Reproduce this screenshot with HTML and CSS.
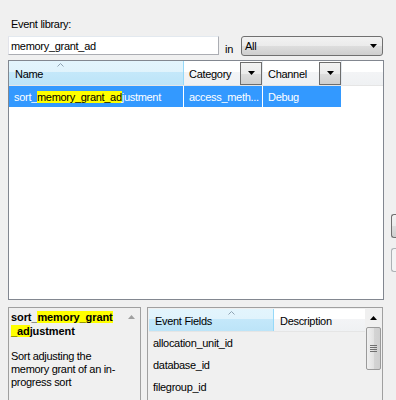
FILE: index.html
```html
<!DOCTYPE html>
<html lang="en">
<head>
    <meta charset="UTF-8">
    <meta name="viewport" content="width=device-width, initial-scale=1.0">
    <title>Event library</title>
    <link rel="stylesheet" href="styles.css">
</head>
<body>
    <div class="window">
        <div class="main">
            <div class="library-label">Event library:</div>

            <div class="search-row">
                <input class="search-box" type="text" value="memory_grant_ad">
                <span class="in-label">in</span>
                <div class="combo">
                    <span>All</span>
                    <svg class="combo-arrow" width="7" height="4" viewBox="0 0 7 4"><path d="M0 0h7L3.5 4z" fill="#000"/></svg>
                </div>
            </div>

            <div class="event-grid">
                <div class="grid-header">
                    <div class="head col-name sorted">
                        <svg class="sort-arrow" width="7" height="4" viewBox="0 0 7 4"><path d="M0.5 3.5L3.5 0.5L6.5 3.5" fill="none" stroke="#8fa3b3" stroke-width="1"/></svg>
                        Name
                    </div>
                    <div class="head col-cat">
                        Category
                        <span class="filter-btn"><svg width="7" height="4" viewBox="0 0 7 4"><path d="M0 0h7L3.5 4z" fill="#000"/></svg></span>
                    </div>
                    <div class="head col-chan">
                        Channel
                        <span class="filter-btn"><svg width="7" height="4" viewBox="0 0 7 4"><path d="M0 0h7L3.5 4z" fill="#000"/></svg></span>
                    </div>
                    <div class="head col-fill"></div>
                </div>

                <div class="grid-row selected">
                    <div class="cell col-name">sort_<mark>memory_grant_ad</mark>justment</div>
                    <div class="cell col-cat">access_meth...</div>
                    <div class="cell col-chan">Debug</div>
                </div>
            </div>

            <div class="details">
                <div class="summary">
                    <div class="summary-text">
                        <div class="summary-title">sort_<mark>memory_grant</mark><br><mark>_ad</mark>justment</div>
                        <div class="summary-desc">Sort adjusting the<br>memory grant of an in-<br>progress sort</div>
                    </div>
                    <div class="scrollbar plain">
                        <span class="scroll-up"><svg width="7" height="4" viewBox="0 0 7 4"><path d="M0 4h7L3.5 0z" fill="#a0a0a0"/></svg></span>
                    </div>
                </div>

                <div class="fields">
                    <div class="fields-list">
                        <div class="fields-header">
                            <div class="head field-name sorted">
                                <svg class="sort-arrow field-arrow" width="7" height="4" viewBox="0 0 7 4"><path d="M0.5 3.5L3.5 0.5L6.5 3.5" fill="none" stroke="#8fa3b3" stroke-width="1"/></svg>
                                Event Fields
                            </div>
                            <div class="head field-desc">Description</div>
                        </div>
                        <div class="field-row">allocation_unit_id</div>
                        <div class="field-row">database_id</div>
                        <div class="field-row">filegroup_id</div>
                    </div>
                    <div class="scrollbar">
                        <span class="scroll-up"><svg width="7" height="4" viewBox="0 0 7 4"><path d="M0 4h7L3.5 0z" fill="#000"/></svg></span>
                        <span class="scroll-thumb"><span class="grip"></span></span>
                    </div>
                </div>
            </div>
        </div>

        <div class="side">
            <span class="side-btn"></span>
            <span class="side-btn disabled"></span>
        </div>
    </div>
</body>
</html>
```

FILE: styles.css
```css
* {
    margin: 0;
    padding: 0;
    box-sizing: border-box;
}

html, body {
    width: 396px;
    height: 400px;
    overflow: hidden;
}

body {
    background-color: #f0f0f0;
    font-family: "Liberation Sans", Arial, sans-serif;
    font-size: 11px;
    letter-spacing: -0.3px;
    color: #000;
}

mark {
    background-color: #ffff00;
    color: #000;
}

.window {
    display: flex;
    gap: 7px;
    padding-left: 8px;
}

.main {
    width: 376px;
    flex-shrink: 0;
}

.library-label {
    padding: 18px 0 0 3px;
    line-height: 13px;
}

/* search line */
.search-row {
    display: flex;
    align-items: center;
    margin-top: 5px;
    height: 20px;
}

.search-box {
    width: 211px;
    height: 19px;
    align-self: flex-start;
    border: 1px solid #abadb3;
    border-top-color: #e3e9ef;
    border-left-color: #e2e3ea;
    padding: 0 2px;
    font: inherit;
    letter-spacing: inherit;
    outline: none;
    background: #fff;
}

.in-label {
    margin: 5px 0 0 6px;
    width: 16px;
}

.combo {
    width: 142px;
    height: 20px;
    border: 1px solid #707070;
    border-radius: 3px;
    background: linear-gradient(#f2f2f2 0%, #ebebeb 50%, #dddddd 51%, #cfcfcf 100%);
    display: flex;
    align-items: center;
    justify-content: space-between;
    padding: 0 5px 0 3px;
}

/* main grid */
.event-grid {
    margin-top: 4px;
    height: 240px;
    border: 1px solid #828790;
    background: #fff;
}

.grid-header {
    display: flex;
    height: 25px;
    border-bottom: 1px solid #e5e5e5;
}

.head {
    position: relative;
    display: flex;
    align-items: center;
    padding-top: 1px;
    background: linear-gradient(#ffffff 0%, #ffffff 45%, #f3f4f6 46%, #eff1f3 100%);
    border-right: 1px solid #e3e8ee;
}

.head.sorted {
    background: linear-gradient(#e3f5fd 0%, #e0f3fc 45%, #c4e8fa 46%, #bce4f8 100%);
    border-right: 1px solid #96d9f9;
}

.sort-arrow {
    position: absolute;
    top: 2px;
    left: 48px;
}

.col-name {
    width: 175px;
    padding-left: 6px;
}

.col-cat,
.col-chan {
    width: 79px;
    padding-left: 5px;
    justify-content: space-between;
}

.col-fill {
    flex: 1;
    border-right: none;
}

.filter-btn {
    width: 22px;
    height: 23px;
    margin-top: -1px;
    border: 1px solid #6d6d6d;
    background: linear-gradient(#f2f2f2 0%, #ebebeb 50%, #dddddd 51%, #cfcfcf 100%);
    display: flex;
    align-items: center;
    justify-content: center;
}

.grid-row {
    display: flex;
    height: 21px;
}

.grid-row.selected {
    color: #fff;
}

.cell {
    display: flex;
    align-items: center;
    background-color: #3399ff;
    border-right: 1px solid #fff;
    white-space: nowrap;
    overflow: hidden;
    padding-left: 5px;
}

.grid-row .col-name {
    padding-left: 5px;
}

.grid-row .col-chan {
    justify-content: flex-start;
}

/* bottom panels */
.details {
    display: flex;
    gap: 6px;
    margin-top: 7px;
    height: 93px;
}

.summary {
    width: 133px;
    display: flex;
    border: 1px solid #a0a0a0;
    border-bottom: none;
}

.summary-text {
    flex: 1;
    padding: 2px 0 0 2px;
}

.summary-title {
    font-weight: bold;
    letter-spacing: -0.1px;
    line-height: 14px;
}

.summary-desc {
    margin-top: 12px;
    line-height: 13px;
}

.fields {
    width: 236px;
    display: flex;
    border: 1px solid #a0a0a0;
    border-bottom: none;
    padding: 1px 0 0 1px;
}

.fields-list {
    flex: 1;
}

.fields-header {
    display: flex;
    height: 23px;
    border-bottom: 1px solid #e5e5e5;
}

.field-name {
    width: 125px;
    padding-left: 6px;
}

.field-desc {
    flex: 1;
    padding-left: 6px;
    border-right: none;
}

.field-arrow {
    left: 79px;
}

.field-row {
    height: 22px;
    line-height: 22px;
    padding-left: 4px;
}

.scrollbar {
    width: 17px;
    display: flex;
    flex-direction: column;
    align-items: center;
}

.scroll-up {
    height: 17px;
    display: flex;
    align-items: center;
    justify-content: center;
}

.scrollbar.plain .scroll-up {
    height: 18px;
}

.scroll-thumb {
    width: 15px;
    height: 43px;
    margin-top: 1px;
    border: 1px solid #9a9a9a;
    border-radius: 2px;
    background: linear-gradient(to right, #f0f0f0, #e2e2e2 50%, #d4d4d4 51%, #cfcfcf);
    display: flex;
    align-items: center;
    justify-content: center;
}

.grip {
    width: 7px;
    height: 7px;
    background: repeating-linear-gradient(#6f6f6f 0, #6f6f6f 1px, transparent 1px, transparent 2px);
}

/* buttons cut off at the right edge */
.side {
    display: flex;
    flex-direction: column;
    gap: 10px;
    padding-top: 214px;
}

.side-btn {
    display: block;
    width: 5px;
    height: 24px;
    border: 1px solid #707070;
    border-right: none;
    border-radius: 3px 0 0 3px;
    background: linear-gradient(#f2f2f2 0%, #ebebeb 50%, #dddddd 51%, #cfcfcf 100%);
}

.side-btn.disabled {
    border-color: #adb2b5;
    background: #f4f4f4;
}
```
